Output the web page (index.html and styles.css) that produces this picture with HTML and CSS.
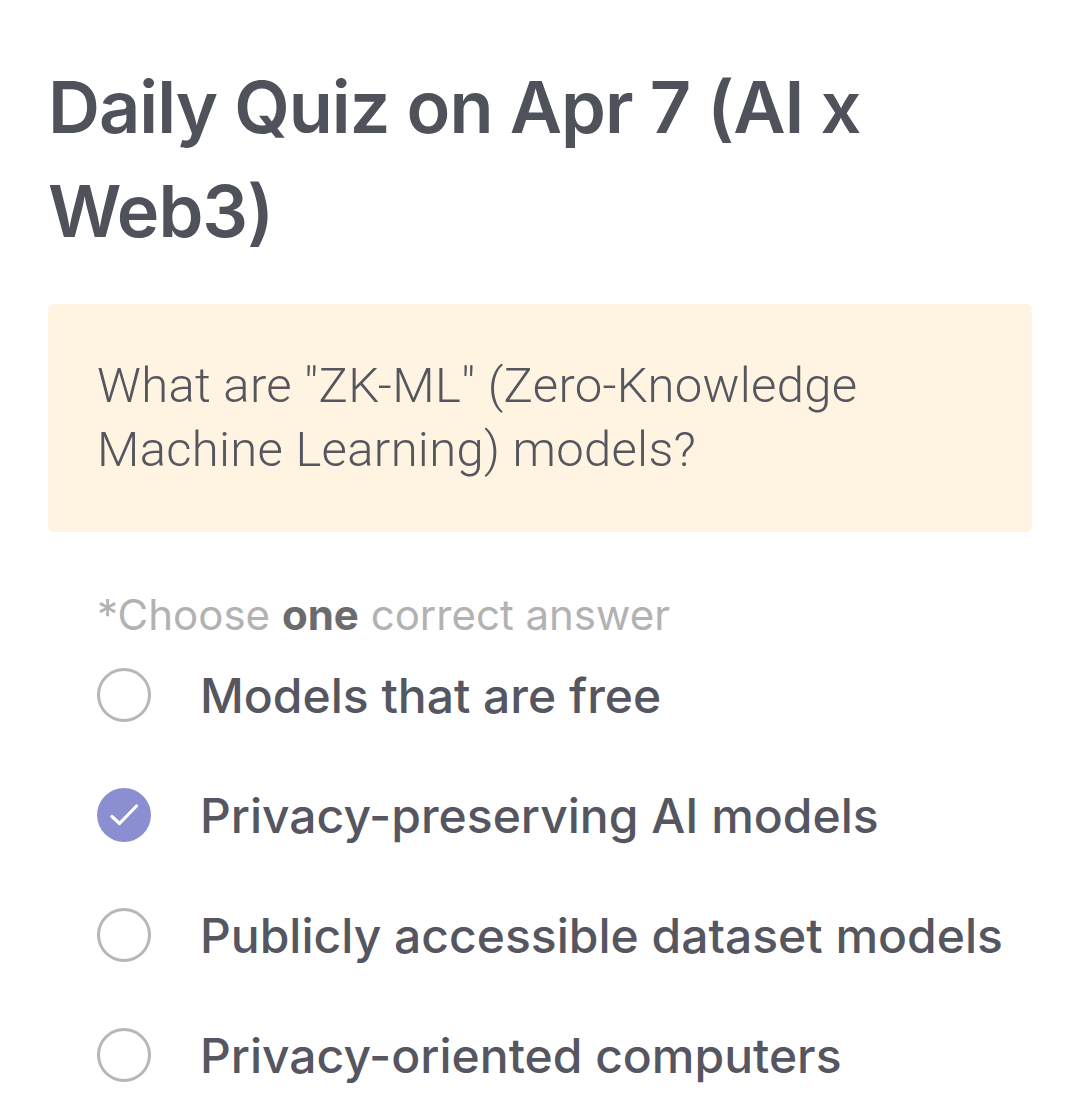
FILE: index.html
```html
<!DOCTYPE html>
<html lang="en">
<head>
<meta charset="utf-8">
<title>Daily Quiz</title>
<link rel="stylesheet" href="styles.css">
</head>
<body>
<main class="page">
  <h1 class="title">Daily Quiz on Apr 7 (AI x Web3)</h1>
  <div class="question-box">
    <p class="question">What are "ZK-ML" (Zero-Knowledge Machine Learning) models?</p>
  </div>
  <p class="hint">*Choose <strong>one</strong> correct answer</p>
  <ul class="options">
    <li class="option">
      <span class="radio"></span>
      <span class="label">Models that are free</span>
    </li>
    <li class="option">
      <span class="radio checked">
        <svg viewBox="0 0 54 54" width="54" height="54"><path d="M15 28.5l7.5 7L39.5 18" fill="none" stroke="#fff" stroke-width="3.2" stroke-linecap="round" stroke-linejoin="round"/></svg>
      </span>
      <span class="label">Privacy-preserving AI models</span>
    </li>
    <li class="option">
      <span class="radio"></span>
      <span class="label">Publicly accessible dataset models</span>
    </li>
    <li class="option">
      <span class="radio"></span>
      <span class="label">Privacy-oriented computers</span>
    </li>
  </ul>
</main>
</body>
</html>
```
FILE: styles.css
```css
html, body {
  margin: 0;
  padding: 0;
  background: #ffffff;
}
.page {
  padding: 55px 48px 0 48px;
  font-family: Inter, "Noto Sans", sans-serif;
}
.title {
  margin: 0;
  font-size: 72px;
  line-height: 104px;
  font-weight: 600;
  color: #50525b;
  letter-spacing: -1px;
  max-width: 840px;
}
.question-box {
  margin-top: 41px;
  background: #fff3e1;
  border-radius: 6px;
  padding: 50px 49px;
}
.question {
  margin: 0;
  font-family: Roboto, "Liberation Sans", sans-serif;
  font-size: 49px;
  line-height: 64px;
  color: #55565e;
  font-weight: 300;
  letter-spacing: 0.3px;
}
.hint {
  margin: 58px 0 0 49px;
  font-size: 42px;
  line-height: 50px;
  color: #b2b2b2;
}
.hint strong {
  color: #6b6b6e;
  font-weight: 700;
}
.options {
  list-style: none;
  margin: -5px 0 0 49px;
  padding: 0;
}
.option {
  display: flex;
  align-items: center;
  height: 120px;
}
.radio {
  box-sizing: border-box;
  width: 54px;
  height: 54px;
  border-radius: 50%;
  border: 3px solid #b7b7b7;
  flex: none;
  display: flex;
  align-items: center;
  justify-content: center;
}
.radio.checked {
  border: none;
  background: #8b8fd1;
}
.radio svg {
  display: block;
}
.label {
  margin-left: 49px;
  font-size: 48px;
  color: #55565f;
  font-weight: 500;
}
```
